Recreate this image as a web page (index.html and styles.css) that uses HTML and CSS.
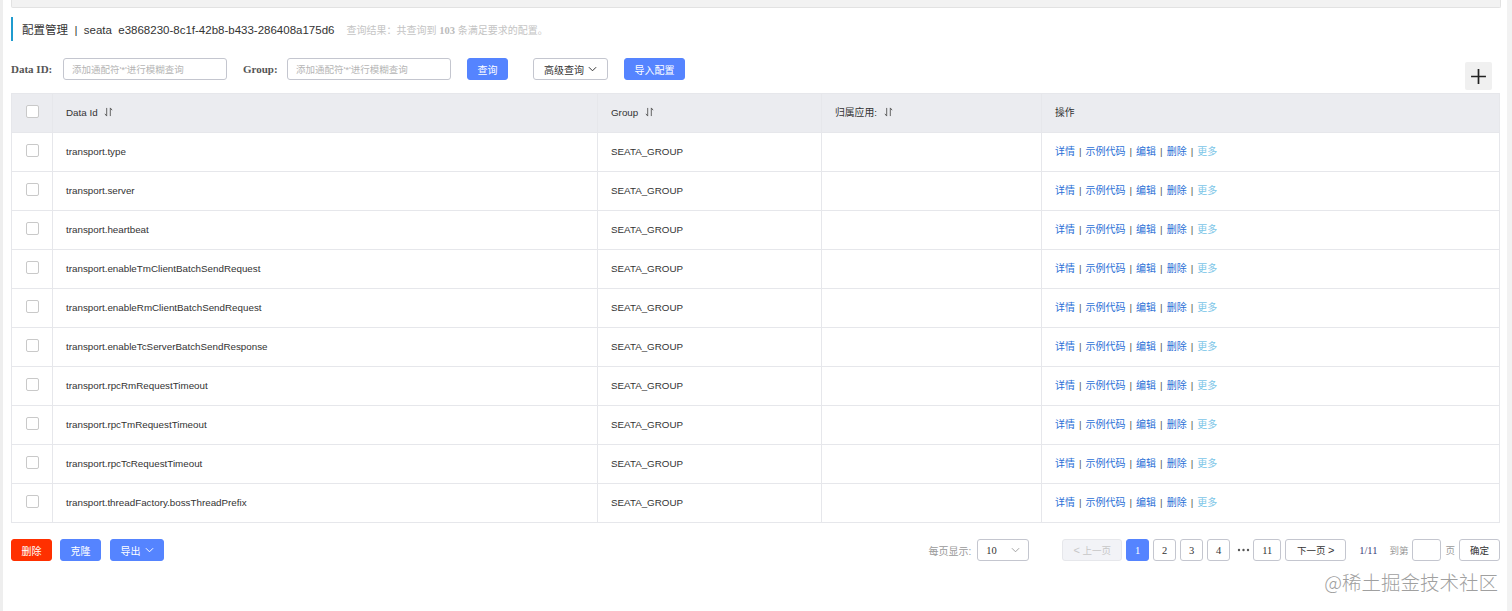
FILE: index.html
```html
<!DOCTYPE html>
<html lang="zh">
<head>
<meta charset="UTF-8"><meta name="viewport" content="width=device-width, initial-scale=1">
<title>配置管理</title>
<link rel="stylesheet" href="styles.css">
</head>
<body>
<div class="page">
  <div class="topbar"></div>

  <div class="title">
    <span class="title-main">配置管理&nbsp; | &nbsp;seata&nbsp; e3868230-8c1f-42b8-b433-286408a175d6</span>
    <span class="title-sub">查询结果：共查询到 <b>103</b> 条满足要求的配置。</span>
  </div>

  <div class="filters">
    <label class="lbl">Data ID:</label>
    <input class="inp" placeholder="添加通配符'*'进行模糊查询">
    <label class="lbl lbl-group">Group:</label>
    <input class="inp" placeholder="添加通配符'*'进行模糊查询">
    <button class="btn btn-primary btn-query">查询</button>
    <button class="btn btn-normal btn-adv">高级查询 <svg class="chev" viewBox="0 0 10 6"><path d="M1 1l4 4 4-4" fill="none" stroke="#333" stroke-width="1.1"/></svg></button>
    <button class="btn btn-primary btn-import">导入配置</button>
    <button class="plus"><svg viewBox="0 0 16 16"><path d="M8 1v14M1 8h14" stroke="#222" stroke-width="1.6"/></svg></button>
  </div>

  <table class="grid">
    <thead>
      <tr>
        <th class="c-check"><span class="cb"></span></th>
        <th class="c-id">Data Id <svg class="sort" viewBox="0 0 10 11"><path d="M3 1v9M3 10L1 7.5M7 10V1M7 1l2 2.5" fill="none" stroke="#555" stroke-width="1"/></svg></th>
        <th class="c-group">Group <svg class="sort" viewBox="0 0 10 11"><path d="M3 1v9M3 10L1 7.5M7 10V1M7 1l2 2.5" fill="none" stroke="#555" stroke-width="1"/></svg></th>
        <th class="c-app">归属应用: <svg class="sort" viewBox="0 0 10 11"><path d="M3 1v9M3 10L1 7.5M7 10V1M7 1l2 2.5" fill="none" stroke="#555" stroke-width="1"/></svg></th>
        <th class="c-op">操作</th>
      </tr>
    </thead>
    <tbody>
      <tr><td class="c-check"><span class="cb"></span></td><td>transport.type</td><td>SEATA_GROUP</td><td></td><td class="ops"><a>详情</a><i>|</i><a>示例代码</a><i>|</i><a>编辑</a><i>|</i><a>删除</a><i>|</i><a class="more">更多</a></td></tr>
      <tr><td class="c-check"><span class="cb"></span></td><td>transport.server</td><td>SEATA_GROUP</td><td></td><td class="ops"><a>详情</a><i>|</i><a>示例代码</a><i>|</i><a>编辑</a><i>|</i><a>删除</a><i>|</i><a class="more">更多</a></td></tr>
      <tr><td class="c-check"><span class="cb"></span></td><td>transport.heartbeat</td><td>SEATA_GROUP</td><td></td><td class="ops"><a>详情</a><i>|</i><a>示例代码</a><i>|</i><a>编辑</a><i>|</i><a>删除</a><i>|</i><a class="more">更多</a></td></tr>
      <tr><td class="c-check"><span class="cb"></span></td><td>transport.enableTmClientBatchSendRequest</td><td>SEATA_GROUP</td><td></td><td class="ops"><a>详情</a><i>|</i><a>示例代码</a><i>|</i><a>编辑</a><i>|</i><a>删除</a><i>|</i><a class="more">更多</a></td></tr>
      <tr><td class="c-check"><span class="cb"></span></td><td>transport.enableRmClientBatchSendRequest</td><td>SEATA_GROUP</td><td></td><td class="ops"><a>详情</a><i>|</i><a>示例代码</a><i>|</i><a>编辑</a><i>|</i><a>删除</a><i>|</i><a class="more">更多</a></td></tr>
      <tr><td class="c-check"><span class="cb"></span></td><td>transport.enableTcServerBatchSendResponse</td><td>SEATA_GROUP</td><td></td><td class="ops"><a>详情</a><i>|</i><a>示例代码</a><i>|</i><a>编辑</a><i>|</i><a>删除</a><i>|</i><a class="more">更多</a></td></tr>
      <tr><td class="c-check"><span class="cb"></span></td><td>transport.rpcRmRequestTimeout</td><td>SEATA_GROUP</td><td></td><td class="ops"><a>详情</a><i>|</i><a>示例代码</a><i>|</i><a>编辑</a><i>|</i><a>删除</a><i>|</i><a class="more">更多</a></td></tr>
      <tr><td class="c-check"><span class="cb"></span></td><td>transport.rpcTmRequestTimeout</td><td>SEATA_GROUP</td><td></td><td class="ops"><a>详情</a><i>|</i><a>示例代码</a><i>|</i><a>编辑</a><i>|</i><a>删除</a><i>|</i><a class="more">更多</a></td></tr>
      <tr><td class="c-check"><span class="cb"></span></td><td>transport.rpcTcRequestTimeout</td><td>SEATA_GROUP</td><td></td><td class="ops"><a>详情</a><i>|</i><a>示例代码</a><i>|</i><a>编辑</a><i>|</i><a>删除</a><i>|</i><a class="more">更多</a></td></tr>
      <tr><td class="c-check"><span class="cb"></span></td><td>transport.threadFactory.bossThreadPrefix</td><td>SEATA_GROUP</td><td></td><td class="ops"><a>详情</a><i>|</i><a>示例代码</a><i>|</i><a>编辑</a><i>|</i><a>删除</a><i>|</i><a class="more">更多</a></td></tr>
    </tbody>
  </table>

  <div class="footer">
    <div class="actions">
      <button class="btn btn-danger">删除</button>
      <button class="btn btn-primary">克隆</button>
      <button class="btn btn-primary btn-export">导出 <svg class="chev" viewBox="0 0 10 6"><path d="M1 1l4 4 4-4" fill="none" stroke="#fff" stroke-width="1.1"/></svg></button>
    </div>
    <div class="pager">
      <span class="pg-label pg-size-label">每页显示:</span>
      <div class="pg-size">10 <svg class="chev" viewBox="0 0 10 6"><path d="M1 1l4 4 4-4" fill="none" stroke="#999" stroke-width="1"/></svg></div>
      <button class="pg pg-prev" disabled><span class="arr">&lt;</span> 上一页</button>
      <button class="pg pg-num active">1</button>
      <button class="pg pg-num">2</button>
      <button class="pg pg-num">3</button>
      <button class="pg pg-num">4</button>
      <svg class="pg-ellipsis" viewBox="0 0 19 4"><circle cx="5" cy="2" r="1.2" fill="#555"/><circle cx="9.5" cy="2" r="1.2" fill="#555"/><circle cx="14" cy="2" r="1.2" fill="#555"/></svg>
      <button class="pg pg-num pg-wide">11</button>
      <button class="pg pg-next">下一页 <span class="arr">&gt;</span></button>
      <span class="pg-total">1/11</span>
      <span class="pg-label pg-goto">到第</span>
      <input class="pg-input">
      <span class="pg-label">页</span>
      <button class="pg pg-ok">确定</button>
    </div>
  </div>

  <div class="watermark">@稀土掘金技术社区</div>
</div>
</body>
</html>
```

FILE: styles.css
```css
html,body{margin:0;padding:0;background:#fff}
body{font-family:"Liberation Sans","Noto Sans CJK SC",sans-serif;font-size:10px;color:#333;height:611px;overflow:hidden;border-left:3px solid #eee;border-right:5px solid #f2f2f2;box-sizing:border-box}
.page{position:relative;padding:0 6px 0 8px;height:611px}

.topbar{height:7px;background:#f2f2f2;border:1px solid #e2e2e2;border-top:none;border-radius:0 0 2px 2px}

.title{margin-top:9px;height:24px;border-left:2px solid #1f9bcf;padding-left:9px;display:flex;align-items:center;gap:12px;white-space:nowrap}
.title-main{font-size:11.5px;color:#333}
.title-sub{font-size:10px;color:#c4c4c4}
.title-sub b{font-family:"Liberation Serif",serif;font-size:10.5px;color:#bbb}

.filters{display:flex;align-items:flex-start;height:32px;margin-top:17px}
.lbl{font-family:"Liberation Serif","Noto Sans CJK SC",serif;font-weight:bold;font-size:11px;color:#555;line-height:22px;width:52px}
.lbl-group{width:44px;margin-left:16px}
.inp{width:164px;height:22px;box-sizing:border-box;border:1px solid #c4c6cf;border-radius:3px;padding:0 8px;font-size:9.5px;font-family:inherit;color:#333}
.inp::placeholder{color:#b5b5b5}

.btn{height:22px;box-sizing:border-box;border-radius:3px;font-family:inherit;font-size:10px;padding:0;cursor:pointer;display:inline-flex;align-items:center;justify-content:center;gap:4px;white-space:nowrap}
.btn-primary{background:#5584ff;border:1px solid #5584ff;color:#fff}
.btn-normal{background:#fff;border:1px solid #c4c6cf;color:#333}
.btn-danger{background:#ff3000;border:1px solid #ff3000;color:#fff}
.btn-query{margin-left:16px;width:41px}
.btn-adv{margin-left:25px;width:75px}
.btn-import{margin-left:16px;width:61px}
.chev{width:9px;height:6px}

.plus{margin-left:auto;margin-right:9px;align-self:flex-end;width:27px;height:28px;background:#f0f0f0;border:none;border-radius:2px;padding:0;display:flex;align-items:center;justify-content:center}
.plus svg{width:17px;height:17px}

.grid{margin-top:3px;width:1489px;border-collapse:collapse;border:1px solid #e6e7eb;table-layout:fixed}
.grid th,.grid td{height:38px;border:1px solid #e6e7eb;text-align:left;padding:0 13px;font-weight:normal;white-space:nowrap;font-size:9.8px;line-height:12px}
.grid th{background:#ebecf0;color:#333}
.grid td{color:#333}
.c-check{width:41px;box-sizing:border-box;text-align:center!important;padding:0!important}
.c-id{width:545px;box-sizing:border-box}
.c-group{width:224px;box-sizing:border-box}
.c-app{width:220px;box-sizing:border-box}
.cb{display:inline-block;width:11px;height:11px;border:1px solid #c9c9c9;border-radius:2px;background:#fff;vertical-align:top;margin-bottom:3px}
.sort{width:9px;height:10px;vertical-align:-1px;margin-left:4px}
.ops{color:#444}
.ops a{color:#2a6fd6;font-size:10px}
.ops i{font-style:normal;margin:0 4px;color:#555}
.ops a.more{color:#7cc6e8}

.footer{display:flex;align-items:center;justify-content:space-between;margin-top:16px;height:22px}
.actions{display:flex;gap:8px}
.actions .btn{width:41px}
.actions .btn-export{width:54px;margin-left:1px}
.pager{display:flex;align-items:center;margin-right:1px}
.pg-label{color:#999;font-size:9.5px}
.pg-size-label{font-size:10px}
.pg-size{margin-left:6px;width:52px;height:22px;box-sizing:border-box;border:1px solid #c4c6cf;border-radius:3px;display:flex;align-items:center;justify-content:space-between;padding:0 8px;font-family:"Liberation Serif",serif;font-size:10.5px;color:#333;margin-right:33px}
.pg{height:22px;box-sizing:border-box;border:1px solid #c4c6cf;border-radius:3px;background:#fff;font-family:inherit;font-size:9.5px;color:#333;padding:0;margin-right:4px}
.pg-prev{width:60px;background:#f2f3f7;border-color:#e6e7eb;color:#c7c7c7}
.pg-next{width:61px}
.arr{font-size:11px}
.pg-num{width:23px;font-family:"Liberation Serif",serif;font-size:10.5px}
.pg-wide{width:28px}
.pg.active{background:#5584ff;border-color:#5584ff;color:#fff}
.pg-ellipsis{width:19px;height:4px}
.pg-total{margin-left:9px;font-family:"Liberation Serif",serif;font-size:10.5px;color:#3a3a7a}
.pg-goto{margin-left:12px}
.pg-input{width:29px;height:22px;box-sizing:border-box;border:1px solid #c4c6cf;border-radius:3px;margin:0 4px}
.pg-ok{width:41px;margin-left:4px;margin-right:0}

.watermark{position:absolute;right:9px;top:567px;font-size:19.5px;color:#a0a0a0;font-family:"Noto Sans CJK SC",sans-serif;font-weight:300}
```
